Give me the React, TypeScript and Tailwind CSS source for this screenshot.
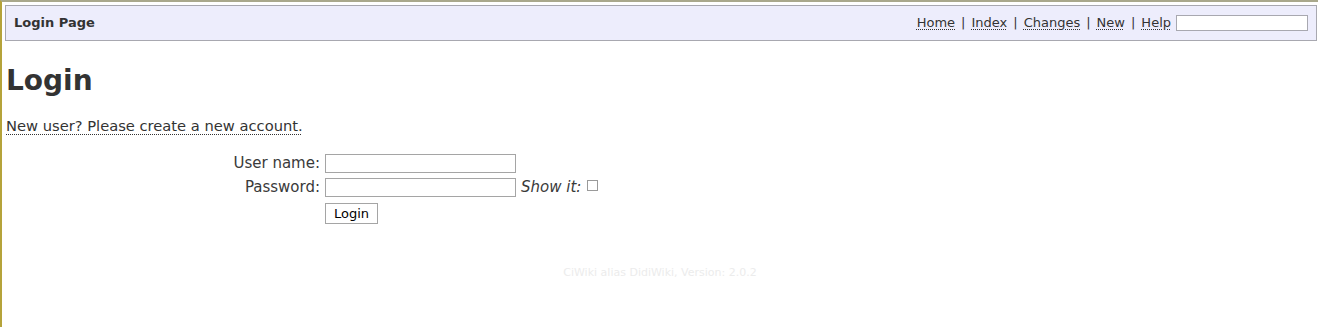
import React, { useState } from 'react';

const navLinks = ['Home', 'Index', 'Changes', 'New', 'Help'];

function App() {
  const [showPass, setShowPass] = useState(false);

  return (
    <div
      className="min-h-[327px] bg-white text-[#333] border-t-2 border-t-[#a9a88c] border-l-2 border-l-[#b5a33a]"
      style={{ fontFamily: '"DejaVu Sans", Verdana, sans-serif' }}
    >
      {/* Header bar */}
      <div className="ml-[3px] mr-[1px] mt-[3px] h-[36px] flex items-center justify-between border border-[#a8a8b0] bg-[#ededfc] pl-[8px] pr-[8px]">
        <span className="text-[13px] font-bold text-[#333]">Login Page</span>
        <div className="flex items-center text-[13px] text-[#333]">
          {navLinks.map((link, i) => (
            <React.Fragment key={link}>
              {i > 0 && <span className="mx-[6px]">|</span>}
              <a href="#" className="underline decoration-dotted decoration-1 underline-offset-2">
                {link}
              </a>
            </React.Fragment>
          ))}
          <input
            type="text"
            className="ml-[5px] w-[132px] h-[16px] border border-[#a8a8b0] bg-white"
          />
        </div>
      </div>

      {/* Main content */}
      <div className="px-[4px]">
        <h1 className="mt-[22px] text-[28px] font-bold leading-[36px] text-[#333]">Login</h1>
        <p className="mt-[18px] text-[14.7px] leading-[18px]">
          <a href="#" className="underline decoration-dotted decoration-1 underline-offset-[3px]">
            New user? Please create a new account.
          </a>
        </p>

        <div className="mt-[19px] grid grid-cols-[319px_auto] auto-rows-[19px] gap-y-[5px] items-center text-[15px] text-[#3a3a3a]">
          <label className="text-right pr-[5px]">User name:</label>
          <div>
            <input type="text" className="w-[191px] h-[19px] border border-[#a5a5a5] bg-white" />
          </div>
          <label className="text-right pr-[5px]">Password:</label>
          <div className="flex items-center">
            <input
              type={showPass ? 'text' : 'password'}
              className="w-[191px] h-[19px] border border-[#a5a5a5] bg-white"
            />
            <span className="ml-[5px] italic">Show it:</span>
            <span
              onClick={() => setShowPass(!showPass)}
              className="ml-[6px] mb-[4px] w-[11px] h-[11px] border border-[#9a9a9a] bg-white inline-block"
            />
          </div>
          <div />
          <div className="self-start">
            <button
              type="button"
              className="h-[21px] px-[8px] border border-[#a5a5a5] bg-white text-[13px] text-black leading-none"
            >
              Login
            </button>
          </div>
        </div>

        <div className="mt-[44px] text-center text-[11px] text-[#ececec]">
          CiWiki alias DidiWiki, Version: 2.0.2
        </div>
      </div>
    </div>
  );
}

export default App;
